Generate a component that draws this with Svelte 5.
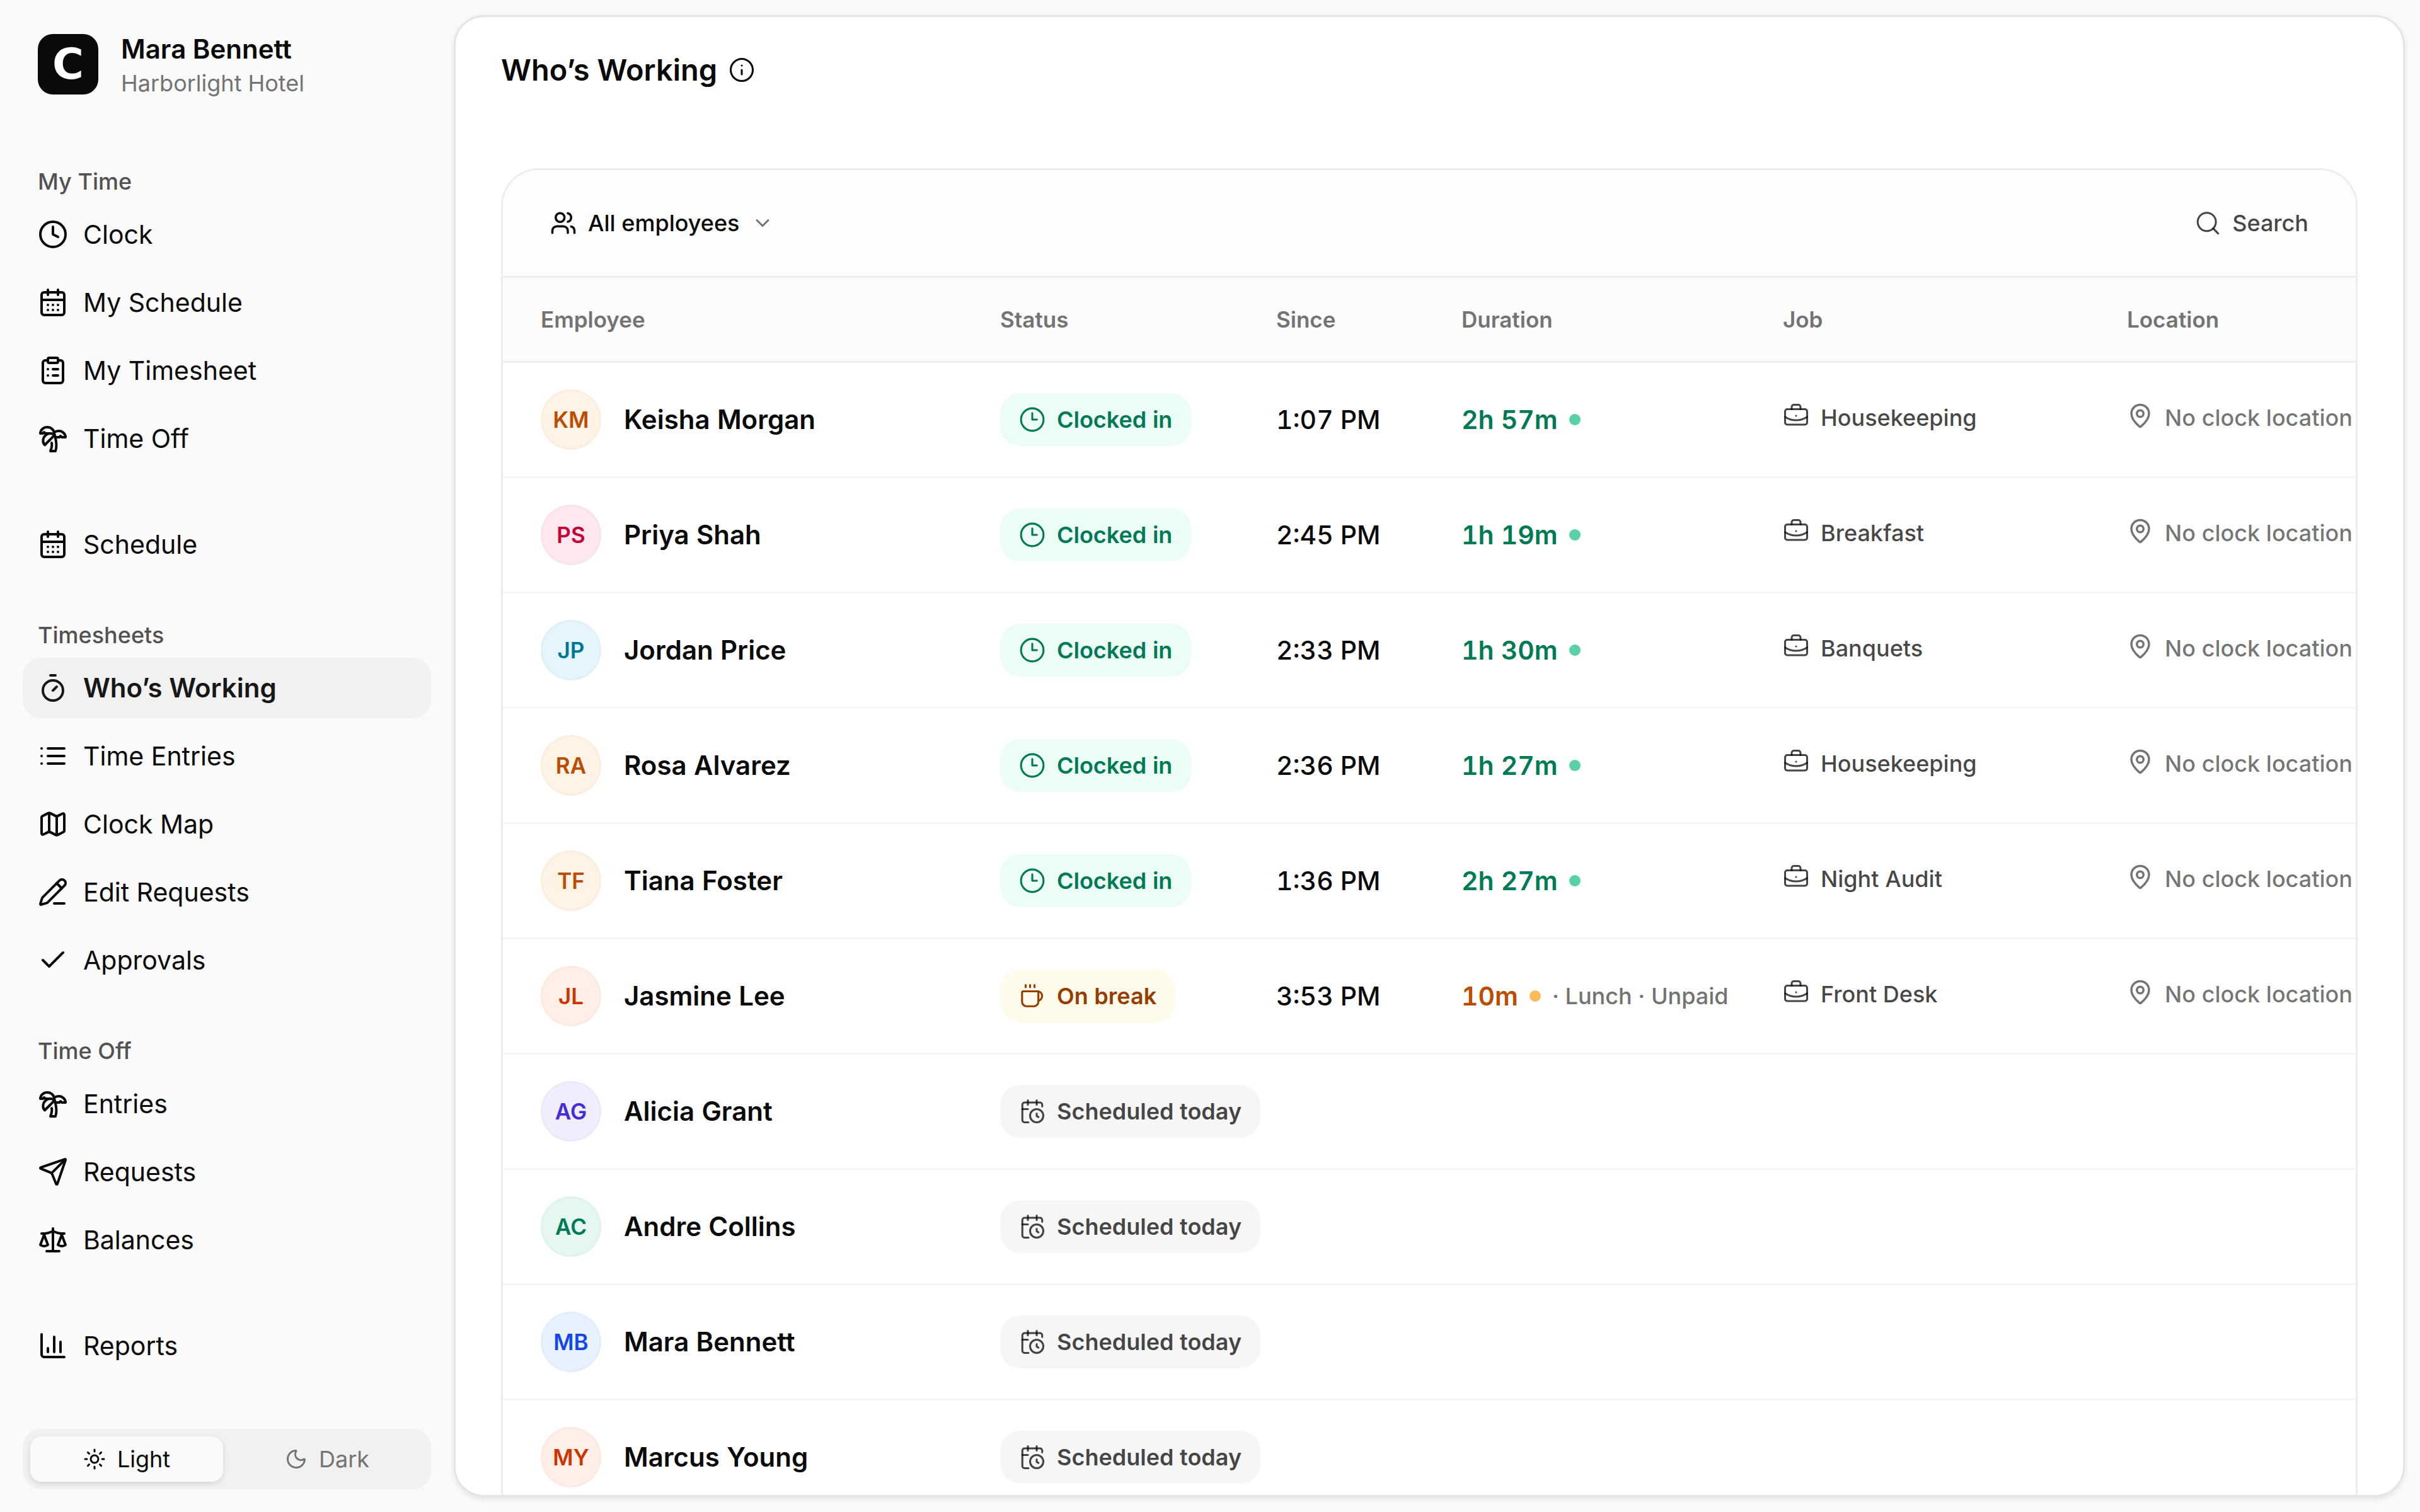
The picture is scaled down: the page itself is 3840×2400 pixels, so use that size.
<script lang="ts">
	type NavItem = { label: string; icon: string; active?: boolean };
	type NavGroup = { title?: string; items: NavItem[] };
	type Employee = {
		name: string;
		initials: string;
		tone: string;
		status: 'in' | 'break' | 'scheduled';
		since?: string;
		duration?: string;
		note?: string;
		job?: string;
	};

	// 24x24 stroke icons, one entry per stroke
	const icons: Record<string, string[]> = {
		clock: ['M22 12a10 10 0 1 1-20 0a10 10 0 1 1 20 0', 'M12 6v6l4 2'],
		calendar: ['M8 2v4', 'M16 2v4', 'M5 4h14a2 2 0 0 1 2 2v14a2 2 0 0 1-2 2H5a2 2 0 0 1-2-2V6a2 2 0 0 1 2-2Z', 'M3 10h18', 'M8 14h.01', 'M12 14h.01', 'M16 14h.01', 'M8 18h.01', 'M12 18h.01', 'M16 18h.01'],
		clipboard: ['M9 2h6a1 1 0 0 1 1 1v2a1 1 0 0 1-1 1H9a1 1 0 0 1-1-1V3a1 1 0 0 1 1-1Z', 'M16 4h2a2 2 0 0 1 2 2v14a2 2 0 0 1-2 2H6a2 2 0 0 1-2-2V6a2 2 0 0 1 2-2h2', 'M12 11h4', 'M12 16h4', 'M8 11h.01', 'M8 16h.01'],
		palm: ['M13 8c0-2.76-2.46-5-5.5-5S2 5.24 2 8h2l1-1 1 1h4', 'M13 7.14A5.82 5.82 0 0 1 16.5 6c3.04 0 5.5 2.24 5.5 5h-3l-1-1-1 1h-3', 'M5.89 9.71c-2.15 2.15-2.3 5.47-.35 7.43l4.24-4.25.7-.7.71-.71 2.12-2.12c-1.95-1.96-5.27-1.8-7.42.35', 'M11 15.5c.5 2.5-.17 4.5-1 6.5h4c2-5.5-.5-12-1-14'],
		timer: ['M10 2h4', 'M12 14l3-3', 'M20 14a8 8 0 1 1-16 0a8 8 0 1 1 16 0'],
		list: ['M3 6h.01', 'M3 12h.01', 'M3 18h.01', 'M8 6h13', 'M8 12h13', 'M8 18h13'],
		map: ['M14.106 5.553a2 2 0 0 0 1.788 0l3.659-1.83A1 1 0 0 1 21 4.619v12.764a1 1 0 0 1-.553.894l-4.553 2.277a2 2 0 0 1-1.788 0l-4.212-2.106a2 2 0 0 0-1.788 0l-3.659 1.83A1 1 0 0 1 3 19.381V6.618a1 1 0 0 1 .553-.894l4.553-2.277a2 2 0 0 1 1.788 0z', 'M15 5.764v15', 'M9 3.236v15'],
		pen: ['M13 21h8', 'm15 5 4 4', 'M21.174 6.812a1 1 0 0 0-3.986-3.987L3.842 16.174a2 2 0 0 0-.5.83l-1.321 4.352a.5.5 0 0 0 .623.622l4.353-1.32a2 2 0 0 0 .83-.497z'],
		check: ['M20 6 9 17l-5-5'],
		send: ['M14.536 21.686a.5.5 0 0 0 .937-.024l6.5-19a.496.496 0 0 0-.635-.635l-19 6.5a.5.5 0 0 0-.024.937l7.93 3.18a2 2 0 0 1 1.112 1.11z', 'm21.854 2.147-10.94 10.939'],
		scale: ['m16 16 3-8 3 8c-.87.65-1.92 1-3 1s-2.13-.35-3-1Z', 'm2 16 3-8 3 8c-.87.65-1.92 1-3 1s-2.13-.35-3-1Z', 'M7 21h10', 'M12 3v18', 'M3 7h2c2 0 5-1 7-2 2 1 5 2 7 2h2'],
		chart: ['M3 3v16a2 2 0 0 0 2 2h16', 'M18 17V9', 'M13 17V5', 'M8 17v-3'],
		sun: ['M16 12a4 4 0 1 1-8 0a4 4 0 1 1 8 0', 'M12 2v2', 'M12 20v2', 'm4.93 4.93 1.41 1.41', 'm17.66 17.66 1.41 1.41', 'M2 12h2', 'M20 12h2', 'm6.34 17.66-1.41 1.41', 'm19.07 4.93-1.41 1.41'],
		moon: ['M20.985 12.486a9 9 0 1 1-9.473-9.472c.405-.022.617.46.402.803a6 6 0 0 0 8.268 8.268c.344-.215.825-.004.803.401'],
		info: ['M22 12a10 10 0 1 1-20 0a10 10 0 1 1 20 0', 'M12 16v-4', 'M12 8h.01'],
		users: ['M16 21v-2a4 4 0 0 0-4-4H6a4 4 0 0 0-4 4v2', 'M13 7a4 4 0 1 1-8 0a4 4 0 1 1 8 0', 'M22 21v-2a4 4 0 0 0-3-3.87', 'M16 3.13a4 4 0 0 1 0 7.75'],
		chevron: ['m6 9 6 6 6-6'],
		search: ['M19.5 11a8.25 8.25 0 1 1-16.5 0a8.25 8.25 0 1 1 16.5 0', 'm21.5 21.5-4.4-4.6'],
		in: ['M22.2 12a10.2 10.2 0 1 1-20.4 0a10.2 10.2 0 1 1 20.4 0', 'M12 6.2V12h4.2'],
		break: ['M3.75 7.75H16.5a1 1 0 0 1 1 1v8.5a4 4 0 0 1-4 4H6.75a4 4 0 0 1-4-4v-8.5a1 1 0 0 1 1-1Z', 'M16.5 7.75h1a4.6 4.4 0 0 1 0 8.5', 'M6 2v2', 'M10 2v2', 'M14 2v2'],
		scheduled: ['M16 14v2.2l1.6 1', 'M16 2v4', 'M21 7.5V6a2 2 0 0 0-2-2H5a2 2 0 0 0-2 2v14a2 2 0 0 0 2 2h3.5', 'M3 10h5', 'M8 2v4', 'M22 16a6 6 0 1 1-12 0a6 6 0 1 1 12 0'],
		briefcase: ['M12 12h.01', 'M16 6V4a2 2 0 0 0-2-2h-4a2 2 0 0 0-2 2v2', 'M22 13a18.15 18.15 0 0 1-20 0', 'M4 6h16a2 2 0 0 1 2 2v10a2 2 0 0 1-2 2H4a2 2 0 0 1-2-2V8a2 2 0 0 1 2-2Z'],
		pin: ['M20 10c0 4.993-5.539 10.193-7.399 11.799a1 1 0 0 1-1.202 0C9.539 20.193 4 14.993 4 10a8 8 0 0 1 16 0', 'M15 10a3 3 0 1 1-6 0a3 3 0 1 1 6 0']
	};

	const groups: NavGroup[] = [
		{
			title: 'My Time',
			items: [
				{ label: 'Clock', icon: 'clock' },
				{ label: 'My Schedule', icon: 'calendar' },
				{ label: 'My Timesheet', icon: 'clipboard' },
				{ label: 'Time Off', icon: 'palm' }
			]
		},
		{ items: [{ label: 'Schedule', icon: 'calendar' }] },
		{
			title: 'Timesheets',
			items: [
				{ label: 'Who’s Working', icon: 'timer', active: true },
				{ label: 'Time Entries', icon: 'list' },
				{ label: 'Clock Map', icon: 'map' },
				{ label: 'Edit Requests', icon: 'pen' },
				{ label: 'Approvals', icon: 'check' }
			]
		},
		{
			title: 'Time Off',
			items: [
				{ label: 'Entries', icon: 'palm' },
				{ label: 'Requests', icon: 'send' },
				{ label: 'Balances', icon: 'scale' }
			]
		},
		{ items: [{ label: 'Reports', icon: 'chart' }] }
	];

	const statusLabels = { in: 'Clocked in', break: 'On break', scheduled: 'Scheduled today' };

	const employees: Employee[] = [
		{ name: 'Keisha Morgan', initials: 'KM', tone: 'amber', status: 'in', since: '1:07 PM', duration: '2h 57m', job: 'Housekeeping' },
		{ name: 'Priya Shah', initials: 'PS', tone: 'rose', status: 'in', since: '2:45 PM', duration: '1h 19m', job: 'Breakfast' },
		{ name: 'Jordan Price', initials: 'JP', tone: 'cyan', status: 'in', since: '2:33 PM', duration: '1h 30m', job: 'Banquets' },
		{ name: 'Rosa Alvarez', initials: 'RA', tone: 'amber', status: 'in', since: '2:36 PM', duration: '1h 27m', job: 'Housekeeping' },
		{ name: 'Tiana Foster', initials: 'TF', tone: 'amber', status: 'in', since: '1:36 PM', duration: '2h 27m', job: 'Night Audit' },
		{ name: 'Jasmine Lee', initials: 'JL', tone: 'orange', status: 'break', since: '3:53 PM', duration: '10m', note: '· Lunch · Unpaid', job: 'Front Desk' },
		{ name: 'Alicia Grant', initials: 'AG', tone: 'indigo', status: 'scheduled' },
		{ name: 'Andre Collins', initials: 'AC', tone: 'emerald', status: 'scheduled' },
		{ name: 'Mara Bennett', initials: 'MB', tone: 'blue', status: 'scheduled' },
		{ name: 'Marcus Young', initials: 'MY', tone: 'orange', status: 'scheduled' }
	];

	let theme = $state('light');
	let filter = $state('all');
</script>

{#snippet icon(name: string, size: string)}
	<svg class="icon {size}" viewBox="0 0 24 24" aria-hidden="true">
		{#each icons[name] as d}
			<path {d} />
		{/each}
	</svg>
{/snippet}

<div class="app">
	<aside class="sidebar">
		<div class="profile">
			<div class="logo">C</div>
			<div class="who">
				<div class="user">Mara Bennett</div>
				<div class="company">Harborlight Hotel</div>
			</div>
		</div>

		<nav>
			{#each groups as group}
				<div class="group">
					{#if group.title}
						<div class="group-title">{group.title}</div>
					{/if}
					{#each group.items as item}
						<a href="#top" class="nav-item" class:active={item.active} aria-current={item.active ? 'page' : undefined}>
							{@render icon(item.icon, 'lg')}
							<span>{item.label}</span>
						</a>
					{/each}
				</div>
			{/each}
		</nav>

		<div class="theme">
			<button class:selected={theme === 'light'} onclick={() => (theme = 'light')}>
				{@render icon('sun', 'sm')}
				<span>Light</span>
			</button>
			<button class:selected={theme === 'dark'} onclick={() => (theme = 'dark')}>
				{@render icon('moon', 'sm')}
				<span>Dark</span>
			</button>
		</div>
	</aside>

	<main class="panel">
		<header class="title">
			<h1>Who’s Working</h1>
			<button class="info" aria-label="About this page">{@render icon('info', 'md thin')}</button>
		</header>

		<section class="card">
			<div class="toolbar">
				<label class="filter">
					{@render icon('users', 'md')}
					<select bind:value={filter} aria-label="Employees">
						<option value="all">All employees</option>
					</select>
					{@render icon('chevron', 'sm')}
				</label>
				<button class="search">
					{@render icon('search', 'md thin')}
					<span>Search</span>
				</button>
			</div>

			<table>
				<thead>
					<tr>
						<th class="col-employee">Employee</th>
						<th class="col-status">Status</th>
						<th class="col-since">Since</th>
						<th class="col-duration">Duration</th>
						<th class="col-job">Job</th>
						<th>Location</th>
					</tr>
				</thead>
				<tbody>
					{#each employees as person}
						<tr>
							<td class="col-employee">
								<div class="person">
									<span class="avatar {person.tone}">{person.initials}</span>
									<span>{person.name}</span>
								</div>
							</td>
							<td>
								<span class="pill {person.status}">
									{@render icon(person.status, 'md thin')}
									<span>{statusLabels[person.status]}</span>
								</span>
							</td>
							<td>{person.since ?? ''}</td>
							<td>
								{#if person.duration}
									<div class="duration {person.status}">
										<strong>{person.duration}</strong>
										<i class="dot"></i>
										{#if person.note}<span class="note">{person.note}</span>{/if}
									</div>
								{/if}
							</td>
							<td class="meta">
								{#if person.job}
									<div class="place job">
										{@render icon('briefcase', 'md thin')}
										<span>{person.job}</span>
									</div>
								{/if}
							</td>
							<td class="meta">
								{#if person.job}
									<div class="place">
										{@render icon('pin', 'md')}
										<span>No clock location</span>
									</div>
								{/if}
							</td>
						</tr>
					{/each}
				</tbody>
			</table>
		</section>
	</main>
</div>

<style>
	:global(body) {
		background: #fafafa;
	}

	.app {
		display: flex;
		height: 100vh;
		overflow: hidden;
		background: #fafafa;
		color: #0a0a0a;
		font-family: Inter, 'Liberation Sans', sans-serif;
		font-size: 41px;
		line-height: 60px;
	}

	button,
	select {
		margin: 0;
		padding: 0;
		border: 0;
		background: none;
		color: inherit;
		font: inherit;
		cursor: pointer;
	}

	.icon {
		flex: none;
		display: block;
		fill: none;
		stroke: currentColor;
		stroke-width: 2;
		stroke-linecap: round;
		stroke-linejoin: round;
	}

	.lg {
		width: 48px;
		height: 48px;
	}

	.md {
		width: 42px;
		height: 42px;
	}

	.sm {
		width: 36px;
		height: 36px;
	}

	.thin {
		stroke-width: 1.75;
	}

	/* Sidebar */
	.sidebar {
		flex: none;
		box-sizing: border-box;
		width: 720px;
		padding: 48px 36px 36px;
		display: flex;
		flex-direction: column;
	}

	.profile {
		display: flex;
		align-items: center;
		gap: 36px;
		padding: 0 24px;
		height: 108px;
		margin-bottom: 108px;
	}

	.logo {
		width: 96px;
		height: 96px;
		border-radius: 24px;
		background: #0a0a0a;
		color: #fff;
		font-family: 'DejaVu Sans', sans-serif;
		font-weight: 700;
		font-size: 68px;
		line-height: 96px;
		text-align: center;
	}

	.who {
		padding-top: 6px;
	}

	.user {
		font-size: 42px;
		font-weight: 600;
		line-height: 54px;
	}

	.company {
		color: #737373;
		font-size: 36px;
		line-height: 54px;
	}

	nav {
		flex: 1;
		display: flex;
		flex-direction: column;
		gap: 72px;
	}

	.group {
		display: flex;
		flex-direction: column;
		gap: 12px;
	}

	.group-title {
		padding: 0 24px;
		color: #525252;
		font-size: 36px;
		font-weight: 500;
		line-height: 48px;
	}

	.nav-item {
		display: flex;
		align-items: center;
		gap: 24px;
		height: 96px;
		padding: 0 24px;
		border-radius: 30px;
		color: inherit;
		text-decoration: none;
	}

	.nav-item.active {
		background: #f1f1f1;
		color: #171717;
		font-size: 42px;
		font-weight: 600;
	}

	.theme {
		display: flex;
		gap: 12px;
		padding: 12px;
		border-radius: 30px;
		background: #f1f1f1;
	}

	.theme button {
		flex: 1;
		display: flex;
		align-items: center;
		justify-content: center;
		gap: 18px;
		height: 72px;
		border-radius: 18px;
		color: #737373;
		font-size: 36px;
	}

	.theme button.selected {
		background: #fafafa;
		color: #0a0a0a;
		box-shadow: 0 3px 9px rgba(0, 0, 0, 0.12);
	}

	/* Main panel */
	.panel {
		flex: 1;
		min-width: 0;
		margin: 24px 24px 24px 0;
		padding: 0 72px;
		overflow: hidden;
		border: 3px solid #e5e5e5;
		border-radius: 48px;
		background: #fff;
		box-shadow: 0 3px 9px rgba(0, 0, 0, 0.1);
	}

	.title {
		display: flex;
		align-items: center;
		gap: 18px;
		height: 168px;
		margin-bottom: 72px;
	}

	h1 {
		margin: 0;
		font-size: 47px;
		font-weight: 600;
		line-height: 60px;
	}

	.card {
		overflow: hidden;
		border: 3px solid #ededed;
		border-bottom: 0;
		border-radius: 60px 60px 0 0;
		background: #fff;
	}

	.toolbar {
		display: flex;
		align-items: center;
		justify-content: space-between;
		height: 168px;
		padding: 0 75px;
		border-bottom: 3px solid #ededed;
		background: #fdfdfd;
		font-size: 36px;
		font-weight: 500;
	}

	.filter,
	.search {
		display: flex;
		align-items: center;
		gap: 18px;
	}

	.filter select {
		appearance: none;
	}

	.filter .sm {
		color: #737373;
	}

	.search {
		color: rgba(10, 10, 10, 0.76);
	}

	/* Table */
	table {
		width: 100%;
		table-layout: fixed;
		border-collapse: separate;
		border-spacing: 0;
	}

	th,
	td {
		padding: 0;
		text-align: left;
		vertical-align: middle;
		white-space: nowrap;
	}

	th {
		height: 132px;
		border-bottom: 3px solid #ededed;
		background: #fcfcfc;
		color: #737373;
		font-size: 35px;
		font-weight: 600;
	}

	td {
		height: 180px;
		border-bottom: 3px solid #f5f5f5;
		font-variant-numeric: tabular-nums;
		font-weight: 500;
	}

	.col-employee {
		width: 729px;
		padding-left: 60px;
	}

	.col-status {
		width: 438px;
	}

	.col-since {
		width: 294px;
	}

	.col-duration {
		width: 510px;
	}

	.col-job {
		width: 546px;
	}

	.person {
		display: flex;
		align-items: center;
		gap: 36px;
		font-size: 42px;
		font-weight: 600;
	}

	.avatar {
		box-sizing: border-box;
		width: 96px;
		height: 96px;
		border: 3px solid rgba(0, 0, 0, 0.02);
		border-radius: 50%;
		font-size: 35px;
		line-height: 90px;
		text-align: center;
	}

	.amber {
		background: #fff3e6;
		color: #bb4d00;
	}

	.rose {
		background: #fde8ef;
		color: #c70036;
	}

	.cyan {
		background: #e4f6fb;
		color: #007595;
	}

	.orange {
		background: #ffefe6;
		color: #ca3500;
	}

	.indigo {
		background: #efedfe;
		color: #432dd7;
	}

	.emerald {
		background: #e4f8f0;
		color: #007a55;
	}

	.blue {
		background: #e8f2ff;
		color: #1447e6;
	}

	.pill {
		display: inline-flex;
		align-items: center;
		gap: 18px;
		height: 84px;
		padding: 0 30px;
		border-radius: 32px;
		font-size: 36px;
		font-weight: 600;
		vertical-align: middle;
	}

	.pill.in {
		background: #ecfdf5;
		color: #007a55;
	}

	.pill.break {
		background: #fffbeb;
		color: #973c00;
	}

	.pill.scheduled {
		background: #f6f6f6;
		color: rgba(10, 10, 10, 0.76);
	}

	.duration {
		display: flex;
		align-items: center;
		gap: 18px;
	}

	.duration strong {
		font-weight: 600;
	}

	.duration.in {
		color: #007a55;
	}

	.duration.break {
		color: #bb4d00;
	}

	.dot {
		width: 18px;
		height: 18px;
		border-radius: 50%;
		background: #59d1a8;
	}

	.break .dot {
		background: #fdbc5b;
	}

	.note {
		color: #737373;
		font-size: 36px;
	}

	td.meta {
		height: 174px;
		padding-bottom: 6px;
	}

	.place {
		display: flex;
		align-items: center;
		gap: 18px;
		color: rgba(10, 10, 10, 0.57);
		font-size: 36px;
	}

	.place.job {
		color: rgba(10, 10, 10, 0.76);
	}

	.place .icon {
		margin-bottom: 6px;
	}
</style>
